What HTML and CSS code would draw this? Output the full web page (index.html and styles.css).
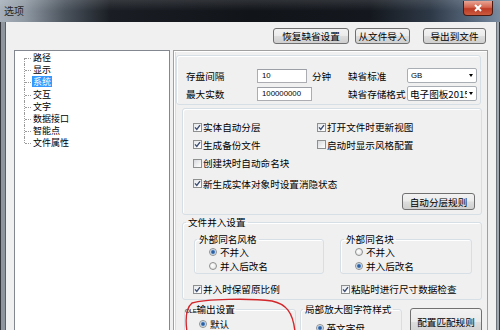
FILE: index.html
```html
<!DOCTYPE html>
<html lang="zh-CN">
<head>
<meta charset="utf-8">
<title>选项</title>
<link rel="stylesheet" href="styles.css">
</head>
<body>
<div class="window">
  <div class="titlebar">
    <span class="title">选项</span>
    <div class="close"><svg class="close-x" width="10" height="8" viewBox="0 0 10 8"><path d="M2 1 L8 7 M8 1 L2 7"/></svg></div>
  </div>
  <div class="client">
    <div class="toolbar">
      <div class="btn btn-reset">恢复缺省设置</div>
      <div class="btn btn-import">从文件导入</div>
      <div class="btn btn-export">导出到文件</div>
    </div>
    <div class="main">
      <ul class="tree">
        <li><span>路径</span></li>
        <li><span>显示</span></li>
        <li class="sel"><span>系统</span></li>
        <li><span>交互</span></li>
        <li><span>文字</span></li>
        <li><span>数据接口</span></li>
        <li><span>智能点</span></li>
        <li><span>文件属性</span></li>
      </ul>
      <div class="panel">
        <div class="group group-save">
          <div class="form-grid">
            <span class="lbl">存盘间隔</span>
            <div class="field w50">10</div>
            <span class="lbl">分钟</span>
            <span class="lbl">缺省标准</span>
            <div class="combo"><span class="combo-text num">GB</span><span class="arrow"></span></div>
            <span class="lbl">最大实数</span>
            <div class="field w55">100000000</div>
            <span></span>
            <span class="lbl">缺省存储格式</span>
            <div class="combo"><span class="combo-text">电子图板2015</span><span class="arrow"></span></div>
          </div>
        </div>
        <div class="group group-checks">
          <div class="checks">
            <div class="opt"><span class="cb on"><svg width="7" height="7" viewBox="0 0 7 7"><path d="M1 3.4 L2.8 5.4 L6 1.2"/></svg></span>实体自动分层</div>
            <div class="opt"><span class="cb on"><svg width="7" height="7" viewBox="0 0 7 7"><path d="M1 3.4 L2.8 5.4 L6 1.2"/></svg></span>打开文件时更新视图</div>
            <div class="opt"><span class="cb on"><svg width="7" height="7" viewBox="0 0 7 7"><path d="M1 3.4 L2.8 5.4 L6 1.2"/></svg></span>生成备份文件</div>
            <div class="opt"><span class="cb"></span>启动时显示风格配置</div>
            <div class="opt"><span class="cb"></span>创建块时自动命名块</div>
            <div></div>
            <div class="opt span2"><span class="cb on"><svg width="7" height="7" viewBox="0 0 7 7"><path d="M1 3.4 L2.8 5.4 L6 1.2"/></svg></span>新生成实体对象时设置消隐状态</div>
          </div>
          <div class="btn-row"><div class="btn btn-layer">自动分层规则</div></div>
        </div>
        <fieldset class="fs fs-merge">
          <legend class="lg-merge">文件并入设置</legend>
          <div class="merge-row">
            <fieldset class="fs fs-sub fs-style">
              <legend class="lg-style">外部同名风格</legend>
              <div class="radios">
                <div class="opt"><span class="rb on"></span>不并入</div>
                <div class="opt"><span class="rb"></span>并入后改名</div>
              </div>
            </fieldset>
            <fieldset class="fs fs-sub fs-block">
              <legend class="lg-block">外部同名块</legend>
              <div class="radios">
                <div class="opt"><span class="rb"></span>不并入</div>
                <div class="opt"><span class="rb on"></span>并入后改名</div>
              </div>
            </fieldset>
          </div>
          <div class="merge-checks">
            <div class="opt"><span class="cb on"><svg width="7" height="7" viewBox="0 0 7 7"><path d="M1 3.4 L2.8 5.4 L6 1.2"/></svg></span>并入时保留原比例</div>
            <div class="opt"><span class="cb on"><svg width="7" height="7" viewBox="0 0 7 7"><path d="M1 3.4 L2.8 5.4 L6 1.2"/></svg></span>粘贴时进行尺寸数据检查</div>
          </div>
        </fieldset>
        <div class="bottom-row">
          <fieldset class="fs fs-ole">
            <legend class="lg-ole"><span class="ole">OLE</span>输出设置</legend>
            <div class="opt ole-opt"><span class="rb on"></span>默认</div>
          </fieldset>
          <fieldset class="fs fs-zoom">
            <legend class="lg-zoom">局部放大图字符样式</legend>
            <div class="opt zoom-opt"><span class="rb on"></span>英文字母</div>
          </fieldset>
          <div class="btn btn-match">配置匹配规则</div>
        </div>
      </div>
    </div>
  </div>
</div>
<svg class="annotation" width="500" height="330" viewBox="0 0 500 330"><path d="M187 332 C185 318 186 308 192 303 C205 299 250 298 272 301 C286 304 293 312 295 332"/></svg>
</body>
</html>
```

FILE: styles.css
```css
* { box-sizing: border-box; }
html, body { margin: 0; padding: 0; }
body {
  width: 500px;
  height: 330px;
  overflow: hidden;
  position: relative;
  font-family: "Noto Sans CJK SC", "Noto Sans", sans-serif;
  font-size: 9.6px;
  line-height: 12px;
  color: #000;
  background: #3a3d42;
}
.window {
  width: 500px;
  height: 330px;
  display: flex;
  flex-direction: column;
  background: linear-gradient(to right, #34373c 0, #34373c 1px, #8f959c 1px, #8f959c 5px, #5a5f66 5px, #5a5f66 6px, #f0f0f0 6px, #f0f0f0 496px, #6d737a 496px, #6d737a 497px, #a2a8af 497px, #a2a8af 499px, #33363b 499px);
}
.titlebar {
  height: 22px;
  flex: none;
  display: flex;
  align-items: flex-start;
  background:
    linear-gradient(to bottom, rgba(255,255,255,0.12), rgba(255,255,255,0) 50%),
    linear-gradient(to right, #a7b0ba 0, #8f99a3 5%, #4b535d 13%, #1a1e24 22%, #111419 50%, #14181e 74%, #2d3846 86%, #5f7186 96%, #7a8ba0 100%);
}
.title {
  margin: 5px 0 0 4px;
  font-size: 10px;
  line-height: 12px;
  color: #262626;
}
.close {
  margin: 1px 7px 0 auto;
  width: 30px;
  height: 15px;
  border: 1px solid #4d1a12;
  border-top: none;
  border-radius: 0 0 4px 4px;
  background: linear-gradient(to bottom, #e8a595 0, #d4644e 45%, #bd3a24 55%, #c95a3e 100%);
  display: flex;
  align-items: center;
  justify-content: center;
}
.close-x path { stroke: #fff; stroke-width: 2; fill: none; }

.client {
  flex: 1;
  margin: 0 4px 0 6px;
  background: #f0f0f0;
  display: flex;
  flex-direction: column;
  min-height: 0;
}
.toolbar {
  flex: none;
  display: flex;
  justify-content: flex-end;
  padding: 6px 10px 0 0;
  margin-bottom: 6px;
}
.btn {
  height: 16px;
  border: 1px solid #707070;
  border-radius: 3px;
  background: linear-gradient(to bottom, #f2f2f2 0, #ebebeb 48%, #dddddd 52%, #cfcfcf 100%);
  display: flex;
  align-items: center;
  justify-content: center;
  font-size: 9.6px;
  line-height: 12px;
  color: #000;
  white-space: nowrap;
}
.btn-reset { width: 76px; margin-right: 6px; }
.btn-import { width: 55px; margin-right: 13px; }
.btn-export { width: 63px; }

.main {
  flex: 1;
  display: flex;
  gap: 3px;
  padding: 0 8px;
  min-height: 0;
}
.tree {
  width: 156px;
  flex: none;
  margin: 0;
  padding: 1px 0 0 0;
  list-style: none;
  background: #fff;
  border: 1px solid #828790;
  border-bottom: none;
  font-size: 9px;
}
.tree li {
  position: relative;
  height: 12.2px;
  line-height: 12.2px;
  padding-left: 17px;
}
.tree li::before {
  content: "";
  position: absolute;
  left: 9px;
  top: 0;
  height: 100%;
  border-left: 1px dotted #9a9a9a;
}
.tree li:first-child::before { top: 50%; height: 50%; }
.tree li:last-child::before { height: 50%; }
.tree li::after {
  content: "";
  position: absolute;
  left: 10px;
  top: 50%;
  width: 6px;
  border-top: 1px dotted #9a9a9a;
}
.tree li span { padding: 0 1px; display: inline-block; height: 11px; line-height: 11px; }
.tree li.sel span { background: #3399ff; color: #fff; }

.panel {
  flex: 1;
  border: 1px solid #a0a0a0;
  border-bottom: none;
  box-shadow: inset 1px 1px 0 #fff, inset 2px 0 0 #dcdcdc;
  display: flex;
  flex-direction: column;
}
.group {
  border: 1px solid #d5dfe5;
  border-radius: 3px;
  box-shadow: inset 1px 1px 0 #fff;
}
.group-save {
  margin: 4px 6px 0 2px;
  padding: 12px 0 3px 9px;
}
.form-grid {
  display: grid;
  grid-template-columns: 71px 55px 36px 59px 70px;
  grid-auto-rows: 15px;
  row-gap: 3px;
  align-items: center;
}
.lbl { white-space: nowrap; }
.field {
  height: 14px;
  border: 1px solid #abadb3;
  border-top-color: #9c9fa6;
  background: #fff;
  font-family: "Liberation Sans", Arial, sans-serif;
  font-size: 7.8px;
  line-height: 12px;
  padding-left: 4px;
}
.w50 { width: 50px; }
.w55 { width: 55px; }
.combo {
  width: 70px;
  height: 15px;
  border: 1px solid #a9aeb5;
  border-radius: 2px;
  background: #fff;
  display: flex;
  align-items: center;
  padding-left: 2px;
  overflow: hidden;
}
.combo-text {
  flex: 1;
  overflow: hidden;
  white-space: nowrap;
  line-height: 12px;
}
.combo-text.num {
  font-family: "Liberation Sans", Arial, sans-serif;
  font-size: 7.8px;
  padding-left: 1px;
}
.arrow {
  flex: none;
  width: 0;
  height: 0;
  margin: 0 3px 0 2px;
  border-left: 2.5px solid transparent;
  border-right: 2.5px solid transparent;
  border-top: 3px solid #000;
}

.group-checks {
  margin: 3px 5px 0 8px;
  padding: 12px 6px 4px 10px;
}
.checks {
  display: grid;
  grid-template-columns: 124px 1fr;
  grid-template-rows: 17.5px 18.5px 20.5px 12px;
  align-items: start;
}
.opt {
  display: flex;
  align-items: center;
  height: 12px;
  white-space: nowrap;
}
.span2 { grid-column: 1 / span 2; }
.cb {
  flex: none;
  width: 9px;
  height: 9px;
  margin-right: 1px;
  border: 1px solid #8e8f8f;
  background: linear-gradient(135deg, #d6d9dd 0, #f4f4f4 70%, #ffffff 100%);
  display: flex;
  align-items: center;
  justify-content: center;
}
.cb.on { background: linear-gradient(135deg, #e4e7ea 0, #fafafa 70%, #ffffff 100%); }
.cb svg path { stroke: #3b4d72; stroke-width: 1.4; fill: none; }
.btn-row {
  display: flex;
  justify-content: flex-end;
  margin-top: 3.5px;
}
.btn-layer { width: 73px; height: 17px; }

.fs {
  margin: 0;
  padding: 0;
  min-width: 0;
  border: 1px solid #d5dfe5;
  border-radius: 3px;
  box-shadow: inset 1px 1px 0 #fff;
}
.fs legend {
  padding: 0 2px;
  line-height: 12px;
  height: 12px;
  white-space: nowrap;
}
.fs-merge {
  margin: 1px 5px 0 8px;
  padding: 0 0 4px 0;
}
.lg-merge { margin-left: 3px; }
.merge-row {
  display: flex;
  gap: 16px;
  padding-left: 11px;
  margin-top: 5px;
}
.fs-style { width: 130px; }
.fs-block { width: 132px; }
.lg-style { margin-left: 2px; }
.lg-block { margin-left: 3px; }
.radios {
  display: flex;
  flex-direction: column;
  gap: 1px;
  padding: 0 0 1px 14px;
}
.radios .opt { height: 13px; }
.rb {
  flex: none;
  width: 8px;
  height: 8px;
  margin-right: 3px;
  border-radius: 50%;
  border: 1px solid #8e8f8f;
  background: radial-gradient(circle at 40% 40%, #ffffff 0, #f2f2f2 40%, #d6d6d6 100%);
}
.rb.on {
  background: radial-gradient(circle, #1f4d8a 0, #3a6fb0 1.4px, #9fc0e6 2.2px, #eef2f6 2.8px, #dcdcdc 100%);
}
.merge-checks {
  display: grid;
  grid-template-columns: 148px 1fr;
  padding-left: 10px;
  margin-top: 9px;
}

.bottom-row {
  display: flex;
  align-items: flex-start;
  margin-top: 3px;
  padding-left: 10px;
}
.fs-ole {
  width: 112px;
  height: 60px;
}
.lg-ole { margin-left: 0; padding: 0 1px 0 0 !important; }
.ole {
  font-family: "Liberation Sans", Arial, sans-serif;
  font-size: 6.2px;
  letter-spacing: -0.3px;
}
.ole-opt { margin-top: 3px; padding-left: 14px; }
.fs-zoom {
  width: 102px;
  height: 60px;
  margin-left: 4px;
}
.lg-zoom { margin-left: 2px; }
.zoom-opt { margin-top: 7px; padding-left: 14.5px; }
.btn-match {
  width: 72px;
  height: 28px;
  margin: 5px 0 0 8px;
}

.annotation {
  position: absolute;
  left: 0;
  top: 0;
  pointer-events: none;
}
.annotation path { stroke: #d3262a; stroke-width: 1.4; fill: none; }
```
